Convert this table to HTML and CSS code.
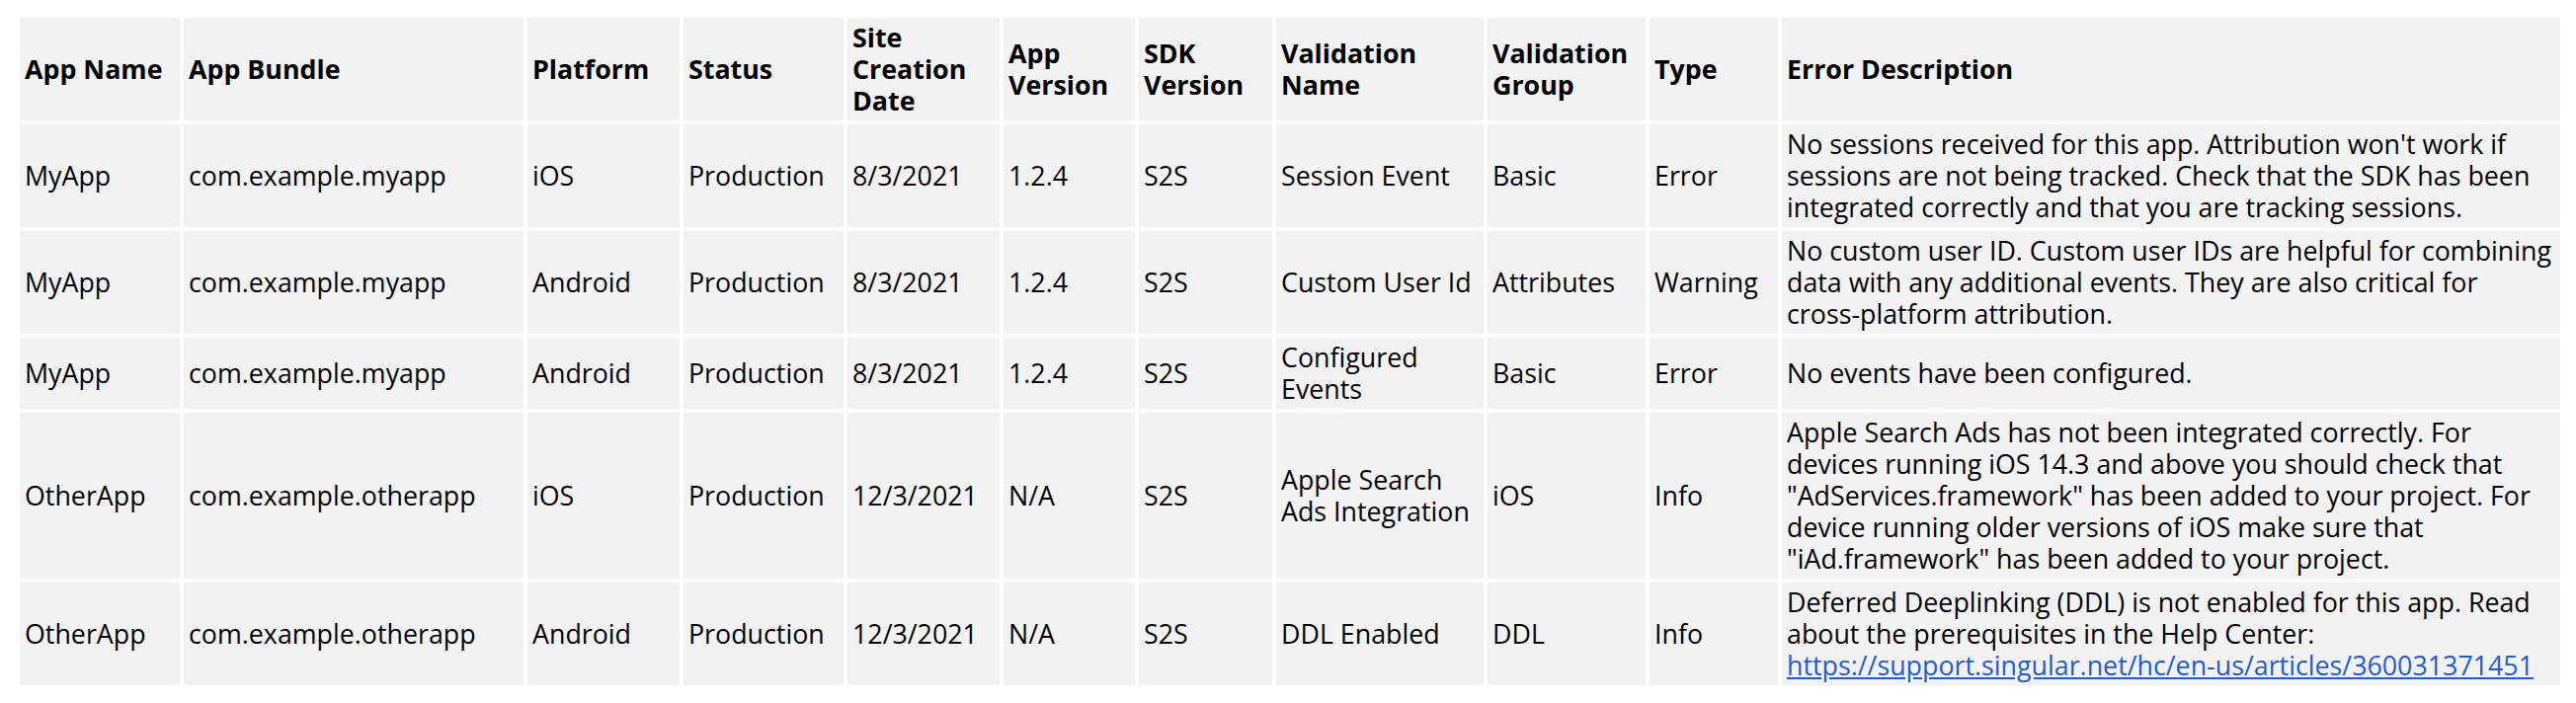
FILE: index.html
```html
<!DOCTYPE html>
<html lang="en">
<head>
<meta charset="utf-8">
<title>App Validations</title>
<link rel="stylesheet" href="styles.css">
</head>
<body>
<table class="report">
  <colgroup>
    <col class="c-name">
    <col class="c-bundle">
    <col class="c-platform">
    <col class="c-status">
    <col class="c-date">
    <col class="c-appver">
    <col class="c-sdkver">
    <col class="c-vname">
    <col class="c-vgroup">
    <col class="c-type">
    <col class="c-desc">
  </colgroup>
  <thead>
    <tr>
      <th>App Name</th>
      <th>App Bundle</th>
      <th>Platform</th>
      <th>Status</th>
      <th>Site Creation Date</th>
      <th>App Version</th>
      <th>SDK Version</th>
      <th>Validation Name</th>
      <th>Validation Group</th>
      <th>Type</th>
      <th>Error Description</th>
    </tr>
  </thead>
  <tbody>
    <tr>
      <td>MyApp</td>
      <td>com.example.myapp</td>
      <td>iOS</td>
      <td>Production</td>
      <td>8/3/2021</td>
      <td>1.2.4</td>
      <td>S2S</td>
      <td>Session Event</td>
      <td>Basic</td>
      <td>Error</td>
      <td>No sessions received for this app. Attribution won't work if sessions are not being tracked. Check that the SDK has been integrated correctly and that you are tracking sessions.</td>
    </tr>
    <tr>
      <td>MyApp</td>
      <td>com.example.myapp</td>
      <td>Android</td>
      <td>Production</td>
      <td>8/3/2021</td>
      <td>1.2.4</td>
      <td>S2S</td>
      <td>Custom User Id</td>
      <td>Attributes</td>
      <td>Warning</td>
      <td>No custom user ID. Custom user IDs are helpful for combining data with any additional events. They are also critical for cross-platform attribution.</td>
    </tr>
    <tr>
      <td>MyApp</td>
      <td>com.example.myapp</td>
      <td>Android</td>
      <td>Production</td>
      <td>8/3/2021</td>
      <td>1.2.4</td>
      <td>S2S</td>
      <td>Configured Events</td>
      <td>Basic</td>
      <td>Error</td>
      <td>No events have been configured.</td>
    </tr>
    <tr>
      <td>OtherApp</td>
      <td>com.example.otherapp</td>
      <td>iOS</td>
      <td>Production</td>
      <td>12/3/2021</td>
      <td>N/A</td>
      <td>S2S</td>
      <td>Apple Search Ads Integration</td>
      <td>iOS</td>
      <td>Info</td>
      <td>Apple Search Ads has not been integrated correctly. For devices running iOS 14.3 and above you should check that "AdServices.framework" has been added to your project. For device running older versions of iOS make sure that "iAd.framework" has been added to your project.</td>
    </tr>
    <tr>
      <td>OtherApp</td>
      <td>com.example.otherapp</td>
      <td>Android</td>
      <td>Production</td>
      <td>12/3/2021</td>
      <td>N/A</td>
      <td>S2S</td>
      <td>DDL Enabled</td>
      <td>DDL</td>
      <td>Info</td>
      <td>Deferred Deeplinking (DDL) is not enabled for this app. Read about the prerequisites in the Help Center: <a href="#">https://support.singular.net/hc/en-us/articles/360031371451</a></td>
    </tr>
  </tbody>
</table>
</body>
</html>
```
FILE: styles.css
```css
html, body {
  background: #ffffff;
}

body {
  margin: 14px 12px 0 16px;
  font-family: "Open Sans", "Noto Sans", "Liberation Sans", sans-serif;
  font-size: 26.8px;
  line-height: 32px;
  color: #000000;
}

.report {
  width: 2580px;
  table-layout: fixed;
  border-collapse: separate;
  border-spacing: 4px;
}

.report th,
.report td {
  background: #f2f2f2;
  padding: 4px 5px;
  text-align: left;
  vertical-align: middle;
  box-sizing: border-box;
}

.report th {
  font-weight: 700;
}

.report a {
  color: #1f5bd4;
  text-decoration: underline;
}

.c-name { width: 162px; }
.c-bundle { width: 344px; }
.c-platform { width: 154px; }
.c-status { width: 162px; }
.c-date { width: 154px; }
.c-appver { width: 133px; }
.c-sdkver { width: 135px; }
.c-vname { width: 210px; }
.c-vgroup { width: 160px; }
.c-type { width: 130px; }
.c-desc { width: 788px; }
```
